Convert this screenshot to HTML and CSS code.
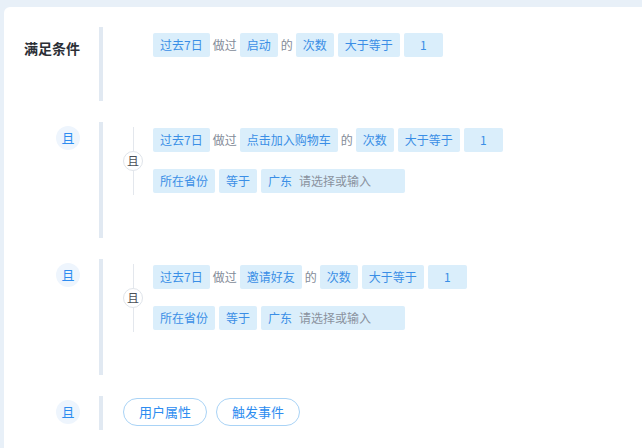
FILE: index.html
```
<!DOCTYPE html>
<html lang="zh">
<head>
<meta charset="utf-8">
<link rel="stylesheet" href="styles.css">
</head>
<body>
<div class="page">
  <div class="card">
    <div class="row">
      <div class="label"><span class="title">满足条件</span></div>
      <div class="content content-first">
        <div class="line">
          <span class="tag">过去7日</span><span class="word">做过</span><span class="tag">启动</span><span class="word">的</span><span class="tag">次数</span><span class="tag">大于等于</span><span class="tag num">1</span>
        </div>
      </div>
    </div>

    <div class="row">
      <div class="label"><span class="and">且</span></div>
      <div class="content">
        <div class="group">
          <div class="logic"><span class="seg"></span><span class="and-small">且</span><span class="seg"></span></div>
          <div class="lines">
            <div class="line">
              <span class="tag">过去7日</span><span class="word">做过</span><span class="tag">点击加入购物车</span><span class="word">的</span><span class="tag">次数</span><span class="tag">大于等于</span><span class="tag num">1</span>
            </div>
            <div class="line">
              <span class="tag">所在省份</span><span class="tag">等于</span><span class="tag select"><span class="val">广东</span><span class="ph">请选择或输入</span></span>
            </div>
          </div>
        </div>
      </div>
    </div>

    <div class="row">
      <div class="label"><span class="and">且</span></div>
      <div class="content">
        <div class="group">
          <div class="logic"><span class="seg"></span><span class="and-small">且</span><span class="seg"></span></div>
          <div class="lines">
            <div class="line">
              <span class="tag">过去7日</span><span class="word">做过</span><span class="tag">邀请好友</span><span class="word">的</span><span class="tag">次数</span><span class="tag">大于等于</span><span class="tag num">1</span>
            </div>
            <div class="line">
              <span class="tag">所在省份</span><span class="tag">等于</span><span class="tag select"><span class="val">广东</span><span class="ph">请选择或输入</span></span>
            </div>
          </div>
        </div>
      </div>
    </div>

    <div class="row row-last">
      <div class="label"><span class="and">且</span></div>
      <div class="content content-btns">
        <span class="btn">用户属性</span><span class="btn">触发事件</span>
      </div>
    </div>
  </div>
</div>
</body>
</html>
```

FILE: styles.css
```
html, body {
  margin: 0;
  padding: 0;
  height: 100%;
}
body {
  font-family: "Noto Sans CJK SC", "Noto Sans", sans-serif;
  background: #e8f0f8;
  overflow: hidden;
}
.page {
  padding: 7px 0 0 4px;
  height: 100%;
  box-sizing: border-box;
}
.card {
  background: #fff;
  border-radius: 6px 0 0 0;
  height: 100%;
  padding-top: 20px;
  box-sizing: border-box;
}
.row {
  display: flex;
  margin-bottom: 21px;
}
.row-last {
  margin-bottom: 0;
}
.label {
  width: 76px;
  padding-right: 19px;
  display: flex;
  justify-content: flex-end;
  align-items: flex-start;
  flex: none;
}
.title {
  margin-top: 11px;
  font-size: 14px;
  line-height: 20px;
  font-weight: bold;
  color: #2b2f36;
}
.and {
  margin-top: 4px;
  width: 24px;
  height: 24px;
  border-radius: 50%;
  background: #eef5fd;
  color: #2d8cf0;
  font-size: 13px;
  line-height: 24px;
  text-align: center;
}
.content {
  border-left: 4px solid #e1e9f2;
  padding: 6px 0 45px 20px;
  flex: 1;
}
.content-first {
  padding: 6px 0 44px 50px;
}
.content-btns {
  padding: 2px 0 4px 20px;
  display: flex;
  gap: 9px;
}
.group {
  display: flex;
}
.logic {
  width: 20px;
  display: flex;
  flex-direction: column;
  align-items: center;
  margin: -1px 0 -2px;
}
.seg {
  flex: 1;
  width: 1px;
  background: #e3e7ed;
}
.and-small {
  width: 18px;
  height: 18px;
  border: 1px solid #dfe4ea;
  border-radius: 50%;
  background: #fff;
  color: #4a4f57;
  font-size: 12px;
  line-height: 18px;
  text-align: center;
}
.lines {
  margin-left: 10px;
  display: flex;
  flex-direction: column;
  gap: 17px;
}
.line {
  display: flex;
  align-items: center;
  gap: 4px;
  height: 24px;
}
.tag {
  height: 24px;
  line-height: 24px;
  padding: 0 7px;
  background: #daeefb;
  color: #3a8ee6;
  font-size: 12px;
  border-radius: 2px;
  white-space: nowrap;
}
.num {
  width: 25px;
  text-align: center;
}
.word {
  font-size: 12px;
  color: #838b98;
  line-height: 24px;
  margin: 0 -1px;
}
.select {
  width: 130px;
  display: flex;
  gap: 7px;
}
.ph {
  color: #8a929e;
}
.btn {
  height: 26px;
  width: 82px;
  border: 1px solid #a9d3f6;
  border-radius: 14px;
  color: #2d8cf0;
  font-size: 13px;
  line-height: 26px;
  text-align: center;
}
```
